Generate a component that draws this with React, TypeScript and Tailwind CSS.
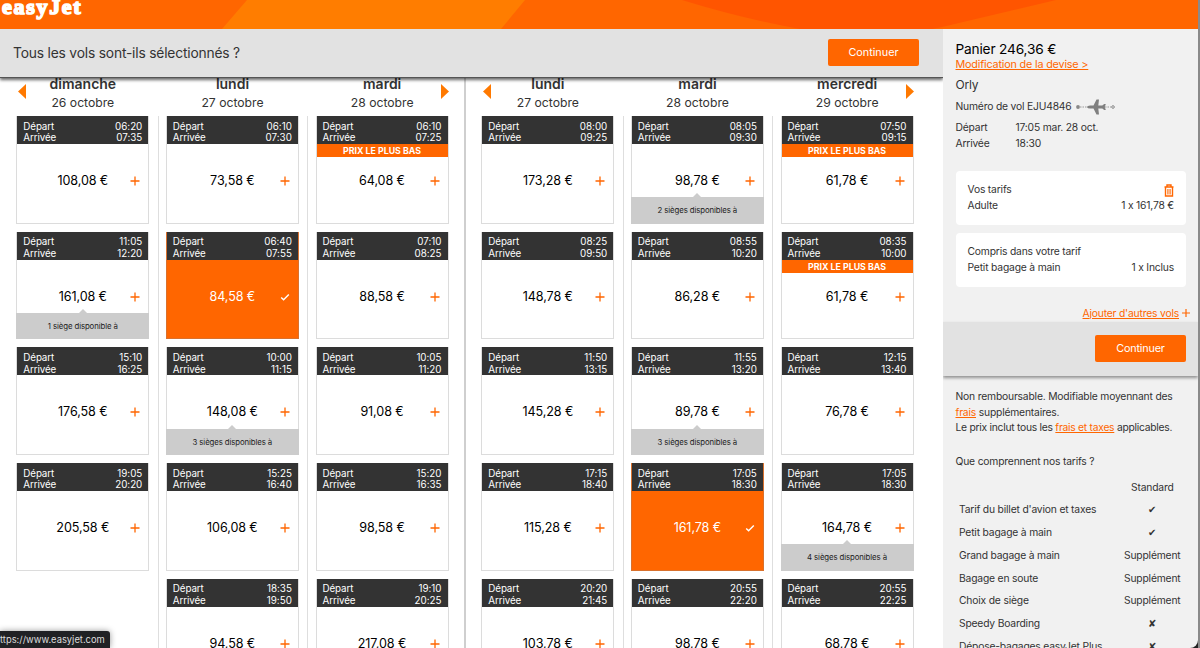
import React from 'react';

interface Flight {
  dep: string;
  arr: string;
  price: string;
  lowest?: boolean;
  selected?: boolean;
  seats?: string;
}

interface Day {
  name: string;
  date: string;
  flights: Flight[];
}

const outbound: Day[] = [
  {
    name: 'dimanche',
    date: '26 octobre',
    flights: [
      { dep: '06:20', arr: '07:35', price: '108,08 €' },
      { dep: '11:05', arr: '12:20', price: '161,08 €', seats: '1 siège disponible à' },
      { dep: '15:10', arr: '16:25', price: '176,58 €' },
      { dep: '19:05', arr: '20:20', price: '205,58 €' }
    ]
  },
  {
    name: 'lundi',
    date: '27 octobre',
    flights: [
      { dep: '06:10', arr: '07:30', price: '73,58 €' },
      { dep: '06:40', arr: '07:55', price: '84,58 €', selected: true },
      { dep: '10:00', arr: '11:15', price: '148,08 €', seats: '3 sièges disponibles à' },
      { dep: '15:25', arr: '16:40', price: '106,08 €' },
      { dep: '18:35', arr: '19:50', price: '94,58 €' }
    ]
  },
  {
    name: 'mardi',
    date: '28 octobre',
    flights: [
      { dep: '06:10', arr: '07:25', price: '64,08 €', lowest: true },
      { dep: '07:10', arr: '08:25', price: '88,58 €' },
      { dep: '10:05', arr: '11:20', price: '91,08 €' },
      { dep: '15:20', arr: '16:35', price: '98,58 €' },
      { dep: '19:10', arr: '20:25', price: '217,08 €' }
    ]
  }
];

const inbound: Day[] = [
  {
    name: 'lundi',
    date: '27 octobre',
    flights: [
      { dep: '08:00', arr: '09:25', price: '173,28 €' },
      { dep: '08:25', arr: '09:50', price: '148,78 €' },
      { dep: '11:50', arr: '13:15', price: '145,28 €' },
      { dep: '17:15', arr: '18:40', price: '115,28 €' },
      { dep: '20:20', arr: '21:45', price: '103,78 €' }
    ]
  },
  {
    name: 'mardi',
    date: '28 octobre',
    flights: [
      { dep: '08:05', arr: '09:30', price: '98,78 €', seats: '2 sièges disponibles à' },
      { dep: '08:55', arr: '10:20', price: '86,28 €' },
      { dep: '11:55', arr: '13:20', price: '89,78 €', seats: '3 sièges disponibles à' },
      { dep: '17:05', arr: '18:30', price: '161,78 €', selected: true },
      { dep: '20:55', arr: '22:20', price: '98,78 €' }
    ]
  },
  {
    name: 'mercredi',
    date: '29 octobre',
    flights: [
      { dep: '07:50', arr: '09:15', price: '61,78 €', lowest: true },
      { dep: '08:35', arr: '10:00', price: '61,78 €', lowest: true },
      { dep: '12:15', arr: '13:40', price: '76,78 €' },
      { dep: '17:05', arr: '18:30', price: '164,78 €', seats: '4 sièges disponibles à' },
      { dep: '20:55', arr: '22:25', price: '68,78 €' }
    ]
  }
];

const fares = [
  { label: "Tarif du billet d'avion et taxes", value: '✔' },
  { label: 'Petit bagage à main', value: '✔' },
  { label: 'Grand bagage à main', value: 'Supplément' },
  { label: 'Bagage en soute', value: 'Supplément' },
  { label: 'Choix de siège', value: 'Supplément' },
  { label: 'Speedy Boarding', value: '✘' },
  { label: 'Dépose-bagages easyJet Plus', value: '✘' }
];

const FlightCard: React.FC<{ flight: Flight }> = ({ flight }) => (
  <div
    className={`flex flex-col w-[133px] h-[107.7px] mb-[8px] shrink-0 border ${
      flight.selected ? 'bg-[#ff6600] border-[#d9712d]' : 'bg-white border-[#dcdcdc]'
    }`}
  >
    <div className="-mt-px h-[28px] shrink-0 bg-[#333333] text-white text-[9.8px] leading-[11.7px] px-[6px] pt-[4.5px]">
      <div className="flex justify-between">
        <span className="tracking-[-0.1px]">Départ</span>
        <span>{flight.dep}</span>
      </div>
      <div className="flex justify-between">
        <span className="tracking-[-0.1px]">Arrivée</span>
        <span>{flight.arr}</span>
      </div>
    </div>
    <div className="h-[13px] shrink-0">
      {flight.lowest && (
        <div className="h-full bg-[#ff6600] text-white text-[8.8px] leading-[13px] font-bold text-center">
          PRIX LE PLUS BAS
        </div>
      )}
    </div>
    <div
      className={`grid grid-cols-[26px_79px_26px] shrink-0 items-center h-[36px] pt-[12px] ${
        flight.selected ? 'text-white' : 'text-black'
      }`}
    >
      <span />
      <span className="text-[12.6px] leading-[24px] tracking-[-0.1px] text-center whitespace-nowrap">{flight.price}</span>
      <svg viewBox="0 0 10 10" className="w-[10px] h-[10px] ml-[8px]" fill="none">
        {flight.selected ? (
          <path d="M1.2 5.4 3.6 7.8 8.8 2.4" stroke="#fff" strokeWidth="1.4" />
        ) : (
          <path d="M5 .5v9M.5 5h9" stroke="#ff6600" strokeWidth="1.3" />
        )}
      </svg>
    </div>
    {flight.seats && (
      <div className="flex flex-col items-center mt-auto -mx-px -mb-px">
        <svg viewBox="0 0 8 4" className="w-[8px] h-[4px]">
          <path d="M0 4 4 0l4 4Z" fill="#cccccc" />
        </svg>
        <div className="w-full h-[26.5px] bg-[#cccccc] text-[#222] text-[7.8px] tracking-[-0.1px] leading-[26px] text-center">
          {flight.seats}
        </div>
      </div>
    )}
  </div>
);

const Arrow: React.FC<{ left?: boolean }> = ({ left }) => (
  <svg viewBox="0 0 8 15" className={`absolute top-[6px] w-[8px] h-[15px] ${left ? 'left-[10px]' : 'right-[8px]'}`}>
    <path d={left ? 'M8 0v15L0 7.5Z' : 'M0 0v15l8-7.5Z'} fill="#ff7900" />
  </svg>
);

const FlightPanel: React.FC<{ days: Day[] }> = ({ days }) => (
  <div className="relative w-[449px] shrink-0">
    <div className="flex h-[38.5px]">
      {days.map((day) => (
        <div key={day.name} className="w-[149.67px] text-center text-[#333]">
          <div className="text-[14px] leading-[15px] -mt-[2px] font-semibold">{day.name}</div>
          <div className="text-[12.2px] leading-[16px] mt-[4px]">{day.date}</div>
        </div>
      ))}
    </div>
    <Arrow left />
    <Arrow />
    <div className="flex">
      {days.map((day, i) => (
        <div
          key={day.name}
          className={`w-[149.67px] ${i === 0 ? 'pl-[8.3px]' : 'pl-[7.2px] border-l border-[#dedede]'}`}
        >
          {day.flights.map((flight) => (
            <FlightCard key={flight.dep} flight={flight} />
          ))}
        </div>
      ))}
    </div>
  </div>
);

const Plane: React.FC = () => (
  <svg viewBox="0 0 39 16" className="w-[39px] h-[16px] ml-[4px]">
    <circle cx="2" cy="8" r="1.9" fill="#888" />
    <circle cx="37" cy="8" r="1.3" fill="none" stroke="#888" />
    <path d="M4 8h8M29 8h6" stroke="#999" strokeWidth="1" strokeDasharray="1.5 1" />
    <path
      d="M11 8Q11.500 6.500 14 6.400H17.500L20.500.6H23L22.300 6.400H26.300L28.200 5H29.800L28.800 8 29.800 11H28.200L26.300 9.600H22.300L23 15.400H20.500L17.500 9.600H14Q11.500 9.500 11 8Z"
      fill="#808080"
    />
  </svg>
);

const ContinueButton: React.FC = () => (
  <button className="w-[91px] h-[27px] rounded-[2px] bg-[#ff6600] text-white text-[10.8px] leading-[27px]">
    Continuer
  </button>
);

const Basket: React.FC = () => (
  <aside className="w-[255px] shrink-0 overflow-hidden rounded-br-[8px] bg-[#f1f1f1] text-[#333] text-[10.3px] tracking-[-0.18px]">
    <div className="h-[293px] pl-[12.5px] pr-[12px] pt-[12px]">
      <div className="text-[13.7px] leading-[17px] text-black">Panier 246,36 €</div>
      <div className="text-[10.8px] leading-[12px] mt-px text-[#ff6600] underline">Modification de la devise &gt;</div>
      <div className="text-[12px] leading-[16px] mt-[6px]">Orly</div>
      <div className="flex items-center h-[16px] mt-[6px]">
        <span>Numéro de vol EJU4846</span>
        <Plane />
      </div>
      <div className="grid grid-cols-[60px_1fr] leading-[16px] mt-[4px]">
        <span>Départ</span>
        <span>17:05 mar. 28 oct.</span>
        <span>Arrivée</span>
        <span>18:30</span>
      </div>
      <div className="mt-[20px] h-[54px] rounded-[4px] bg-white px-[12px] pt-[10px] leading-[16.5px]">
        <div className="flex justify-between items-center">
          <span>Vos tarifs</span>
          <svg viewBox="0 0 10 13" className="w-[10px] h-[13px] mt-[3px]" fill="none" stroke="#ff6600">
            <path d="M.5 3h9M3 2.500V1h4v1.500M1.500 3v9h7V3" strokeWidth="1.400" />
            <path d="M3.700 5v5.500M6.300 5v5.500M5 5v5.500" strokeWidth=".8" />
          </svg>
        </div>
        <div className="flex justify-between">
          <span>Adulte</span>
          <span>1 x 161,78 €</span>
        </div>
      </div>
      <div className="mt-[8px] h-[54px] rounded-[4px] bg-white px-[12px] pt-[10px] leading-[16.5px]">
        <div>Compris dans votre tarif</div>
        <div className="flex justify-between">
          <span>Petit bagage à main</span>
          <span>1 x Inclus</span>
        </div>
      </div>
      <div className="flex justify-end items-center mt-[18px] -mr-[4px] leading-[16px] text-[#ff6600]">
        <span className="underline">Ajouter d'autres vols</span>
        <svg viewBox="0 0 8 8" className="w-[8px] h-[8px] ml-[3px]">
          <path d="M4 0v8M0 4h8" stroke="#ff6600" strokeWidth="1.2" />
        </svg>
      </div>
    </div>
    <div className="flex justify-end items-center h-[54px] pr-[12px] bg-[#e2e2e2] shadow-[0_2px_3px_rgba(0,0,0,0.4)]">
      <ContinueButton />
    </div>
    <div className="pl-[12.5px] pt-[13.5px]">
      <div className="leading-[15.7px] whitespace-nowrap">
        Non remboursable. Modifiable moyennant des
        <br />
        <span className="text-[#ff6600] underline">frais</span> supplémentaires.
        <br />
        <span className="tracking-[-0.26px]">
          Le prix inclut tous les <span className="text-[#ff6600] underline">frais et taxes</span> applicables.
        </span>
      </div>
      <div className="leading-[16px] mt-[17px]">Que comprennent nos tarifs ?</div>
      <div className="flex leading-[16px] mt-[10px] pl-[3.5px]">
        <span className="w-[150px]" />
        <span className="w-[93px] text-center">Standard</span>
      </div>
      <div className="pl-[3.5px] mt-[3.5px]">
        {fares.map((fare) => (
          <div key={fare.label} className="flex items-center h-[22.8px] whitespace-nowrap">
            <span className="w-[150px]">{fare.label}</span>
            <span className="w-[93px] text-center">{fare.value}</span>
          </div>
        ))}
      </div>
    </div>
  </aside>
);

const App: React.FC = () => {
  return (
    <div className="flex flex-col w-[1200px] h-[648px] overflow-hidden relative bg-[#222] font-['Inter',sans-serif] [font-feature-settings:'calt'_0] border-r-2 border-[#8a8a8a]">
      <header className="relative h-[28.5px] shrink-0 bg-[#ff6600] overflow-hidden">
        <svg viewBox="0 0 1198 29" className="absolute inset-0 w-[1198px] h-[29px]">
          <path d="M247 0h278l-24 29H222Z" fill="#ff7d00" />
          <path d="M682 0h374L942 27l-10 2H800Q740 18 682 0Z" fill="#ff5500" />
        </svg>
        <div className="relative text-white font-bold font-['Liberation_Serif',serif] text-[22px] leading-[24px] -mt-[5px] ml-[2px] tracking-[1.7px] [-webkit-text-stroke:1.6px_white]">
          easyJet
        </div>
      </header>
      <div className="flex flex-1 min-h-0">
        <main className="w-[943px] shrink-0 overflow-hidden bg-white">
          <div className="relative z-10 flex justify-between items-center h-[49px] pl-[13px] pr-[24px] bg-[#e2e2e2] border-b border-[#555] shadow-[0_2px_3px_rgba(0,0,0,0.6)]">
            <span className="text-[13.8px] tracking-[-0.18px] pt-px text-[#333]">Tous les vols sont-ils sélectionnés ?</span>
            <ContinueButton />
          </div>
          <div className="flex pl-[8px]">
            <FlightPanel days={outbound} />
            <div className="w-[1.5px] ml-[7px] mr-[7.5px] shrink-0 bg-[#cfcfcf]" />
            <FlightPanel days={inbound} />
          </div>
        </main>
        <Basket />
      </div>
      <div className="absolute left-0 bottom-0 w-[110px] h-[17px] rounded-tr-[3px] bg-[#202124] text-[#ddd] text-[9.4px] leading-[17px] whitespace-nowrap shadow-[0_0_6px_rgba(0,0,0,0.4)]">
        ttps://www.easyjet.com
      </div>
    </div>
  );
};

export default App;
